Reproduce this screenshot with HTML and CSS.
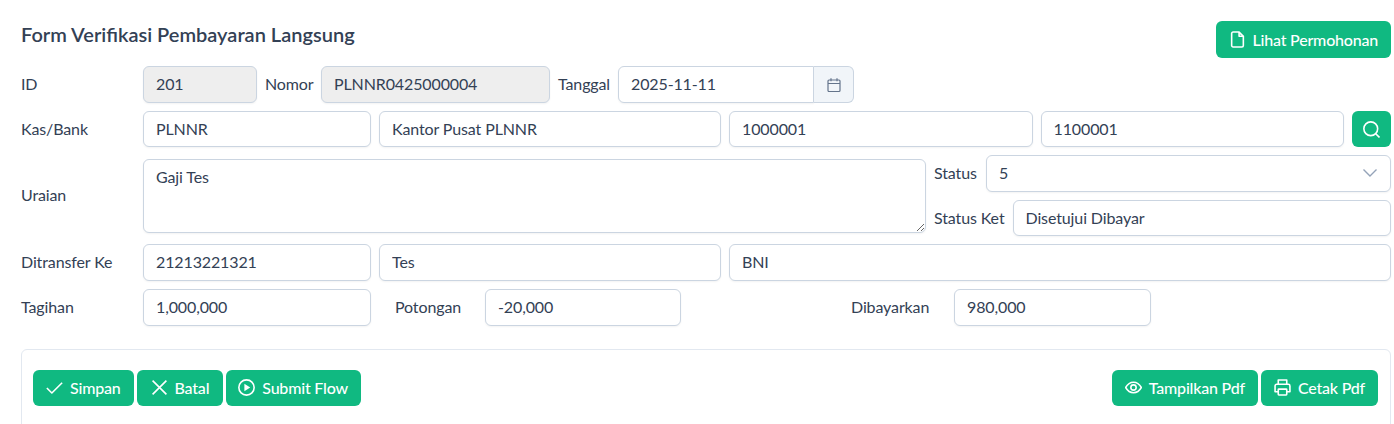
FILE: index.html
```html
<!DOCTYPE html>
<html lang="en">
  <head>
    <meta charset="UTF-8" />
    <title>Form Verifikasi Pembayaran Langsung</title>
    <link rel="stylesheet" href="styles.css">
  </head>
  <body>
    <div class="page">
      <div class="head">
        <h1>Form Verifikasi Pembayaran Langsung</h1>
        <button class="btn">
          <svg class="ico" viewBox="0 0 16 16"><path d="M9.5 1H3.8a1.3 1.3 0 0 0-1.3 1.3v11.4A1.3 1.3 0 0 0 3.800 15h8.400a1.300 1.300 0 0 0 1.300-1.300V5z"/><path d="M9.500 1v4h4"/></svg>
          Lihat Permohonan
        </button>
      </div>

      <div class="row">
        <label class="lbl">ID</label>
        <input class="inp ro w-id" value="201" readonly>
        <label class="l-nomor">Nomor</label>
        <input class="inp ro w-nomor" value="PLNNR0425000004" readonly>
        <label class="l-tanggal">Tanggal</label>
        <div class="date">
          <input class="inp" value="2025-11-11">
          <span class="addon">
            <svg class="ico ico-thin" viewBox="0 0 16 16"><rect x="2" y="3" width="12" height="11.5" rx="1"/><path d="M2 6.500h12M5 1.200v3M11 1.200v3"/></svg>
          </span>
        </div>
      </div>

      <div class="row row-short">
        <label class="lbl">Kas/Bank</label>
        <input class="inp w-a" value="PLNNR">
        <input class="inp w-b" value="Kantor Pusat PLNNR">
        <input class="inp grow" value="1000001">
        <input class="inp grow" value="1100001">
        <button class="btn btn-icon">
          <svg class="ico" viewBox="0 0 16 16"><circle cx="7.300" cy="7.300" r="6.500"/><path d="M12 12l3.500 3.500"/></svg>
        </button>
      </div>

      <div class="row row-uraian">
        <label class="lbl lbl-mid">Uraian</label>
        <textarea class="inp area">Gaji Tes</textarea>
        <div class="side">
          <div class="row">
            <label class="l-status">Status</label>
            <div class="inp select">
              <span>5</span>
              <svg class="chev" viewBox="0 0 16 16"><path d="M1.500 4.500L8 11l6.500-6.500"/></svg>
            </div>
          </div>
          <div class="row">
            <label>Status Ket</label>
            <input class="inp grow" value="Disetujui Dibayar">
          </div>
        </div>
      </div>

      <div class="row">
        <label class="lbl">Ditransfer Ke</label>
        <input class="inp w-a" value="21213221321">
        <input class="inp w-b" value="Tes">
        <input class="inp grow" value="BNI">
      </div>

      <div class="row">
        <label class="lbl">Tagihan</label>
        <input class="inp w-a" value="1,000,000">
        <label class="lbl-pot">Potongan</label>
        <input class="inp w-pot" value="-20,000">
        <label class="lbl-bayar">Dibayarkan</label>
        <input class="inp w-bayar" value="980,000">
      </div>

      <div class="card">
        <div class="tools">
          <button class="btn">
            <svg class="ico" viewBox="0 0 16 16"><path d="M.8 8.500l4.700 4.700L15.200 3.500"/></svg>
            Simpan
          </button>
          <button class="btn btn-batal">
            <svg class="ico" viewBox="0 0 16 16"><path d="M1.500 1.500l13 13M14.500 1.500l-13 13"/></svg>
            Batal
          </button>
          <button class="btn btn-flow">
            <svg class="ico" viewBox="0 0 16 16"><circle cx="8" cy="8" r="7.200"/><path class="fill" d="M6 4.500L11.500 8 6 11.500z"/></svg>
            Submit Flow
          </button>
        </div>
        <div class="tools">
          <button class="btn">
            <svg class="ico" viewBox="0 0 16 16"><path d="M.6 8C2.300 4.900 5 3 8 3s5.700 1.900 7.400 5c-1.700 3.100-4.400 5-7.400 5S2.300 11.100.6 8z"/><circle cx="8" cy="8" r="2.500"/></svg>
            Tampilkan Pdf
          </button>
          <button class="btn">
            <svg class="ico" viewBox="0 0 16 16"><path d="M4 5V1h8v4M4 12H1V6.500A1.500 1.500 0 0 1 2.500 5h11A1.500 1.500 0 0 1 15 6.500V12h-3"/><rect x="4" y="9.500" width="8" height="5.500" rx=".6"/></svg>
            Cetak Pdf
          </button>
        </div>
      </div>
    </div>
  </body>
</html>
```

FILE: styles.css
```css
* {
  box-sizing: border-box;
}
body {
  margin: 0;
  background: #fff;
  color: #334155;
  font-family: Lato, sans-serif;
  font-size: 16px;
  letter-spacing: -.12px;
}
.page {
  padding: 21px 3px 0 21px;
  overflow: hidden;
  height: 424px;
}
h1 {
  margin: 1px 0 0;
  font-size: 20px;
  font-weight: 600;
  letter-spacing: 0;
  color: #334155;
}
.head {
  display: flex;
  justify-content: space-between;
  align-items: flex-start;
  height: 37px;
  margin-bottom: 8px;
}
.row {
  display: flex;
  align-items: center;
  gap: 8px;
  height: 37px;
  margin-bottom: 8px;
}
.row-short {
  height: 36px;
}
.row-short .inp {
  height: 36px;
}
.row-uraian {
  height: 81px;
  align-items: flex-start;
}
label {
  white-space: nowrap;
  padding-bottom: 2px;
}
.lbl {
  width: 114px;
  flex: none;
}
.lbl-mid {
  align-self: center;
}
.l-nomor {
  width: 48px;
}
.l-tanggal {
  width: 52px;
}
.l-status {
  width: 44px;
}
.inp {
  height: 37px;
  padding: 0 12px 2px;
  border: 1px solid #cbd5e1;
  border-radius: 6px;
  background: #fff;
  color: #334155;
  font: inherit;
  letter-spacing: inherit;
  outline: 0;
  min-width: 0;
  box-shadow: 0 1px 2px rgba(18, 18, 23, .05);
}
.ro {
  background: #eee;
}
.w-id {
  width: 114px;
}
.w-nomor {
  width: 229px;
}
.w-a {
  width: 228px;
}
.w-b {
  width: 342px;
}
.w-pot {
  width: 196px;
}
.w-bayar {
  width: 197px;
}
.grow {
  flex: 1;
}
.date {
  display: flex;
  width: 236px;
}
.date .inp {
  flex: 1;
  width: 196px;
  border-radius: 6px 0 0 6px;
}
.addon {
  display: flex;
  align-items: center;
  justify-content: center;
  width: 40px;
  height: 37px;
  border: 1px solid #cbd5e1;
  border-left: 0;
  border-radius: 0 6px 6px 0;
  background: #f1f5f9;
  color: #64748b;
}
.area {
  display: block;
  width: 783px;
  height: 74px;
  margin-top: 4px;
  padding: 7px 12px;
  resize: vertical;
}
.side {
  flex: 1;
}
.side .row:last-child {
  height: 36px;
  margin-bottom: 0;
}
.side .row:last-child .inp {
  height: 36px;
}
.select {
  flex: 1;
  display: flex;
  align-items: center;
  justify-content: space-between;
}
.chev {
  width: 16px;
  height: 16px;
  fill: none;
  stroke: #94a3b8;
  stroke-width: 1.4;
}
.lbl-pot {
  margin-left: 16px;
  width: 82px;
}
.lbl-bayar {
  margin-left: 162px;
  width: 95px;
}
.card {
  display: flex;
  justify-content: space-between;
  margin-top: 23px;
  padding: 20px 12px 20px 11px;
  height: 100px;
  border: 1px solid #e2e8f0;
  border-radius: 6px;
}
.tools {
  display: flex;
  gap: 3px;
}
.btn {
  display: inline-flex;
  align-items: center;
  gap: 7px;
  height: 36px;
  padding: 0 13px 1px;
  border: 0;
  border-radius: 6px;
  background: #10b981;
  color: #fff;
  font: inherit;
  letter-spacing: -.2px;
  font-weight: 500;
}
.head .btn {
  height: 37px;
}
.btn-icon {
  flex: none;
  width: 39px;
  padding: 0;
  justify-content: center;
}
.btn-batal {
  padding: 0 14px 1px;
}
.btn-flow {
  padding: 0 13px 1px 12px;
}
.ico {
  flex: none;
  width: 17px;
  height: 17px;
  fill: none;
  stroke: currentColor;
  stroke-width: 1.5;
  stroke-linejoin: round;
}
.ico-thin {
  width: 16px;
  height: 16px;
  stroke-width: 1.2;
}
.fill {
  fill: currentColor;
  stroke: none;
}
```
